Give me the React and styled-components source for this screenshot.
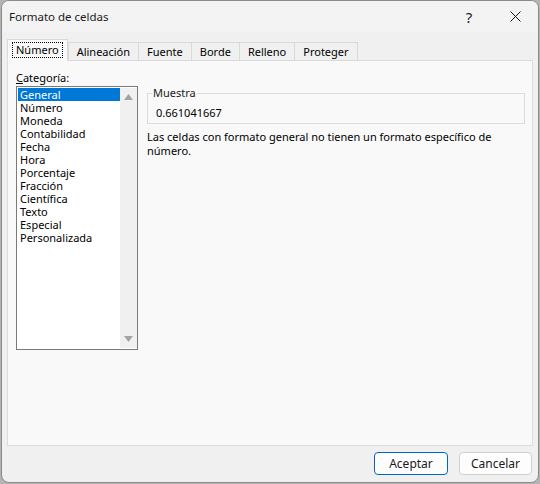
import React, { useState } from 'react';
import styled, { createGlobalStyle } from 'styled-components';

const GlobalStyle = createGlobalStyle`
  html, body {
    margin: 0;
    padding: 0;
    background: #b4b4b4;
  }
  body {
    font-family: "Noto Sans", "Open Sans", sans-serif;
    font-size: 11px;
    color: #000;
  }
`;

const tabs = ['Número', 'Alineación', 'Fuente', 'Borde', 'Relleno', 'Proteger'];
const categories = [
  'General', 'Número', 'Moneda', 'Contabilidad', 'Fecha', 'Hora',
  'Porcentaje', 'Fracción', 'Científica', 'Texto', 'Especial', 'Personalizada',
];

export default function App() {
  const [activeTab, setActiveTab] = useState(0);
  const [selected, setSelected] = useState(0);

  return (
    <>
      <GlobalStyle />
      <Window>
        <TitleBar>
          <Title>Formato de celdas</Title>
          <TitleButton>?</TitleButton>
          <TitleButton>
            <svg width="11" height="11" viewBox="0 0 11 11">
              <path d="M0.5 0.5 L10.5 10.5 M10.5 0.5 L0.5 10.5" stroke="#1a1a1a" strokeWidth="1" />
            </svg>
          </TitleButton>
        </TitleBar>

        <Body>
          <TabStrip>
            {tabs.map((t, i) => (
              <Tab key={t} active={i === activeTab} onClick={() => setActiveTab(i)}>
                <TabLabel active={i === activeTab}>{t}</TabLabel>
              </Tab>
            ))}
          </TabStrip>

          <Panel>
            <LeftColumn>
              <FieldLabel><u>C</u>ategoría:</FieldLabel>
              <ListBox>
                <ListItems>
                  {categories.map((c, i) => (
                    <ListItem key={c} selected={i === selected} onClick={() => setSelected(i)}>
                      {c}
                    </ListItem>
                  ))}
                </ListItems>
                <ScrollBar>
                  <svg width="9" height="6" viewBox="0 0 9 6">
                    <polygon points="0,6 4.5,0 9,6" fill="#a3a3a3" />
                  </svg>
                  <svg width="9" height="6" viewBox="0 0 9 6">
                    <polygon points="0,0 4.5,6 9,0" fill="#a3a3a3" />
                  </svg>
                </ScrollBar>
              </ListBox>
            </LeftColumn>

            <RightColumn>
              <SampleBox>
                <Legend>Muestra</Legend>
                <SampleValue>0.661041667</SampleValue>
              </SampleBox>
              <Description>
                Las celdas con formato general no tienen un formato específico de número.
              </Description>
            </RightColumn>
          </Panel>

          <Footer>
            <Button primary>Aceptar</Button>
            <Button>Cancelar</Button>
          </Footer>
        </Body>
      </Window>
    </>
  );
}

const Window = styled.div`
  width: 536px;
  height: 481px;
  margin-left: 1px;
  border: 1px solid #8a8a8a;
  border-radius: 8px;
  background: #f0f0f0;
  overflow: hidden;
  display: flex;
  flex-direction: column;
`;

const TitleBar = styled.div`
  height: 31px;
  flex-shrink: 0;
  display: flex;
  align-items: center;
  background: #f3f3f3;
  padding-left: 7px;
`;

const Title = styled.div`
  flex: 1;
  font-size: 11.5px;
  color: #1a1a1a;
`;

const TitleButton = styled.div`
  width: 46px;
  height: 31px;
  display: flex;
  align-items: center;
  justify-content: center;
  font-size: 15px;
  color: #1a1a1a;
`;

const Body = styled.div`
  flex: 1;
  display: flex;
  flex-direction: column;
  padding: 7px 5px 0 5px;
`;

const TabStrip = styled.div`
  display: flex;
  align-items: flex-end;
  height: 22px;
  position: relative;
  z-index: 1;
  margin-bottom: -1px;
`;

const Tab = styled.div`
  height: ${p => (p.active ? '22px' : '19px')};
  box-sizing: border-box;
  padding: 0 ${p => (p.active ? '4px' : '7px')};
  margin-right: ${p => (p.active ? '0' : '-1px')};
  display: flex;
  align-items: center;
  border: 1px solid #d9d9d9;
  border-bottom: ${p => (p.active ? '1px solid #f9f9f9' : '1px solid #d9d9d9')};
  background: ${p => (p.active ? '#f9f9f9' : '#f0f0f0')};
  cursor: default;
  white-space: nowrap;
`;

const TabLabel = styled.span`
  padding: 0 ${p => (p.active ? '3px' : '0')};
  border: 1px dotted ${p => (p.active ? '#000' : 'transparent')};
  line-height: 14px;
`;

const Panel = styled.div`
  height: 386px;
  box-sizing: border-box;
  border: 1px solid #dcdcdc;
  background: #f9f9f9;
  display: flex;
  padding: 9px 0 0 8px;
  gap: 9px;
`;

const LeftColumn = styled.div`
  display: flex;
  flex-direction: column;
  width: 122px;
`;

const FieldLabel = styled.div`
  line-height: 15px;
  margin-bottom: 1px;
`;

const ListBox = styled.div`
  height: 264px;
  box-sizing: border-box;
  border: 1px solid #7a7a7a;
  background: #fff;
  display: flex;
  padding: 1px 0 1px 1px;
`;

const ListItems = styled.div`
  flex: 1;
  display: flex;
  flex-direction: column;
`;

const ListItem = styled.div`
  height: 13px;
  line-height: 13px;
  padding-left: 2px;
  background: ${p => (p.selected ? '#0078d7' : 'transparent')};
  color: ${p => (p.selected ? '#fff' : '#000')};
  cursor: default;
`;

const ScrollBar = styled.div`
  width: 17px;
  background: #f0f0f0;
  display: flex;
  flex-direction: column;
  justify-content: space-between;
  align-items: center;
  padding: 6px 0 6px;
  box-sizing: border-box;
`;

const RightColumn = styled.div`
  flex: 1;
  display: flex;
  flex-direction: column;
  padding-right: 7px;
`;

const SampleBox = styled.fieldset`
  margin: 16px 0 0;
  padding: 6px 8px 3px 8px;
  border: 1px solid #dcdcdc;
`;

const Legend = styled.legend`
  padding: 0 1px;
  margin-left: -4px;
  line-height: 14px;
  color: #1a1a1a;
`;

const SampleValue = styled.div`
  line-height: 14px;
`;

const Description = styled.div`
  margin-top: 6px;
  line-height: 14px;
  width: 360px;
`;

const Footer = styled.div`
  flex: 1;
  display: flex;
  justify-content: flex-end;
  align-items: flex-start;
  gap: 11px;
  padding-top: 6px;
  padding-right: 1px;
`;

const Button = styled.button`
  width: ${p => (p.primary ? '74px' : '73px')};
  height: 23px;
  box-sizing: border-box;
  background: #fdfdfd;
  border: 1px solid ${p => (p.primary ? '#0067c0' : '#d0d0d0')};
  border-radius: 4px;
  font-family: inherit;
  font-size: 12px;
  color: #1a1a1a;
  padding: 0;
`;
